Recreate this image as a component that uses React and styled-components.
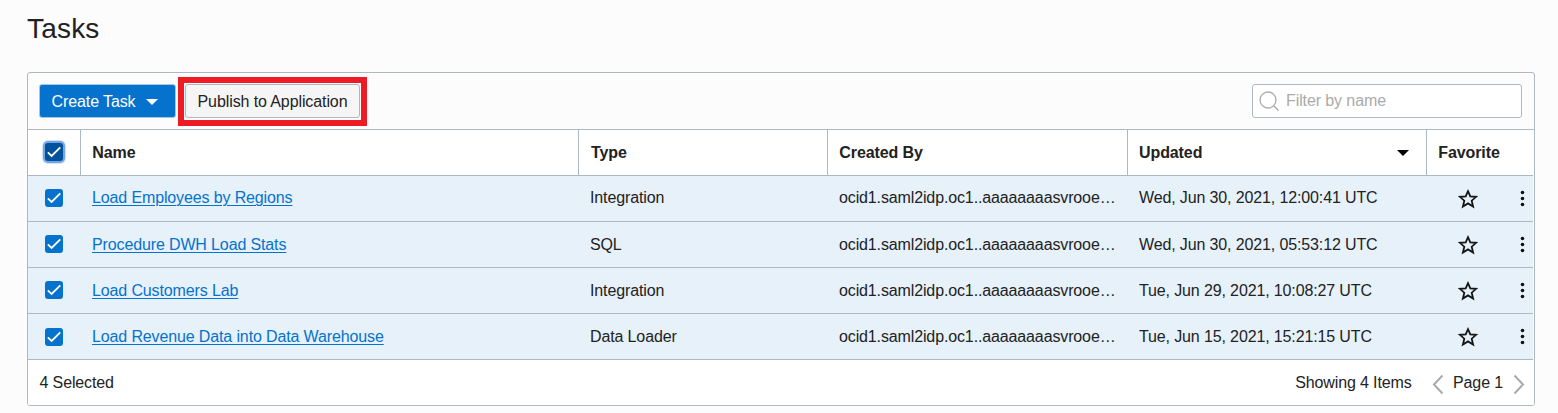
import React from 'react';
import styled, { createGlobalStyle } from 'styled-components';

const line = '#aeb8c2';

const GlobalStyle = createGlobalStyle`
  * { box-sizing: border-box; }
  body {
    margin: 0;
    background: #fcfcfc;
    color: #222;
    font: 16px/20px "Liberation Sans", Arial, sans-serif;
    letter-spacing: -0.13px;
  }
  button, input { font: inherit; color: inherit; letter-spacing: -0.1px; }
`;

const Page = styled.main`
  height: 413px;
  padding: 0 23px 0 27px;
  overflow: hidden;
`;

const Title = styled.h1`
  margin: 0;
  height: 72px;
  padding-top: 12px;
  font-size: 28px;
  line-height: 34px;
  font-weight: 400;
  letter-spacing: 0.2px;
`;

const Panel = styled.section`
  display: flex;
  flex-direction: column;
  height: 334px;
  border: 1px solid ${line};
  border-radius: 3px;
  overflow: hidden;
`;

const Toolbar = styled.div`
  display: flex;
  align-items: flex-start;
  height: 57px;
  padding: 4px 12px 0 11px;
  border-bottom: 1px solid ${line};
`;

const CreateButton = styled.button`
  display: flex;
  align-items: center;
  gap: 11px;
  width: 137px;
  height: 34px;
  margin: 7px 2px 0 0;
  padding: 1px 0 0 11.5px;
  border: 1px solid #a9c6de;
  border-radius: 3px;
  background: #0572ce;
  color: #fff;
  white-space: nowrap;
`;

const Highlight = styled.div`
  width: 189px;
  height: 49px;
  border: 6px solid #ed1c24;
  padding: 1px;
`;

const PublishButton = styled.button`
  display: block;
  width: 175px;
  height: 34px;
  padding: 2px 0 0;
  border: 1px solid ${line};
  border-radius: 3px;
  background: #f5f5f5;
  white-space: nowrap;
`;

const SearchField = styled.label`
  display: flex;
  align-items: center;
  gap: 6px;
  width: 270px;
  height: 34px;
  margin: 7px 0 0 auto;
  padding-left: 6px;
  border: 1px solid ${line};
  border-radius: 3px;
  background: #fff;
`;

const SearchInput = styled.input`
  flex: 1;
  min-width: 0;
  height: 20px;
  padding: 0;
  border: 0;
  outline: 0;
  background: none;
  &::placeholder { color: #aaa; opacity: 1; }
`;

const Row = styled.div`
  display: grid;
  grid-template-columns: 53px 498px 249px 300px 299px 106px;
  height: 46px;
  width: 1505px;
  background: ${(p) => (p.$selected ? '#e6f1fa' : '#fff')};
  border-bottom: 1px solid ${line};
`;

const HeadCell = styled.div`
  display: flex;
  align-items: center;
  justify-content: space-between;
  padding: 0 17px 0 ${(p) => p.$pad || 11.3}px;
  border-right: ${(p) => (p.$last ? '0' : `1px solid ${line}`)};
  font-weight: 700;
  letter-spacing: -0.1px;
`;

const CheckCell = styled.div`
  padding: ${(p) => p.$top}px 0 0 17px;
  border-right: ${(p) => (p.$head ? `1px solid ${line}` : '0')};
`;

const Cell = styled.div`
  min-width: 0;
  padding: ${(p) => p.$top}px 8px 0 11px;
  overflow: hidden;
  text-overflow: ellipsis;
  white-space: nowrap;
`;

const TaskLink = styled.a`
  color: #0572ce;
  text-decoration: underline;
  text-decoration-thickness: 1px;
  text-underline-offset: 2px;
`;

const Actions = styled.div`
  display: flex;
  align-items: flex-start;
  justify-content: space-between;
  padding: 12px 8px 0 30px;
`;

const CheckMark = styled.span`
  display: block;
  width: 18px;
  height: 18px;
  border-radius: 3px;
  background: ${(p) => (p.$focused ? '#01529b' : '#0572ce')};
  box-shadow: ${(p) => (p.$focused ? '0 0 0 2px #74a5e2, 0 0 1px 3px #cfe0f6' : 'none')};
  svg { display: block; }
`;

const Footer = styled.footer`
  display: flex;
  align-items: center;
  flex: 1;
  padding: 0 9.5px 0 11.5px;
  background: #fff;
`;

const Count = styled.span`
  margin: 0 20px 0 auto;
`;

const PageLabel = styled.span`
  margin: 0 9.5px;
`;

const Chevron = ({ flip }) => (
  <svg width="12" height="20" viewBox="0 0 12 20" fill="none" stroke="#aaa" strokeWidth="2" overflow="visible">
    <path d={flip ? 'M1.5 2.5 10 11.5 1.5 20.5' : 'M10.5 2.5 2 11.5 10.5 20.5'} />
  </svg>
);

const Check = ({ focused }) => (
  <CheckMark $focused={focused}>
    <svg width="18" height="18" viewBox="0 0 18 18" fill="none" stroke="#fff" strokeWidth="1.8">
      <path d="M2.8 9.3 6.6 13 15.3 4.3" />
    </svg>
  </CheckMark>
);

const Caret = ({ color }) => (
  <svg width="12" height="6" viewBox="0 0 12 6" fill={color}>
    <path d="M0 0h12L6 6z" />
  </svg>
);

const Star = () => (
  <svg width="22" height="22" viewBox="0 0 22 22" fill="none" stroke="#161616" strokeWidth="1.8">
    <path d="M11 3.1 13.3 8.3 19.1 8.8 14.7 12.7 16.1 18.5 11 15.4 5.9 18.5 7.3 12.7 2.9 8.8 8.7 8.3z" />
  </svg>
);

const Dots = () => (
  <svg width="6" height="22" viewBox="0 0 6 22" fill="#111">
    <circle cx="3.5" cy="4.5" r="1.8" />
    <circle cx="3.5" cy="10.5" r="1.8" />
    <circle cx="3.5" cy="16.5" r="1.8" />
  </svg>
);

const owner = 'ocid1.saml2idp.oc1..aaaaaaaasvrooe…';

const tasks = [
  { name: 'Load Employees by Regions', type: 'Integration', updated: 'Wed, Jun 30, 2021, 12:00:41 UTC', top: 12, check: 13 },
  { name: 'Procedure DWH Load Stats', type: 'SQL', updated: 'Wed, Jun 30, 2021, 05:53:12 UTC', top: 13, check: 13 },
  { name: 'Load Customers Lab', type: 'Integration', updated: 'Tue, Jun 29, 2021, 10:08:27 UTC', top: 13, check: 13 },
  { name: 'Load Revenue Data into Data Warehouse', type: 'Data Loader', updated: 'Tue, Jun 15, 2021, 15:21:15 UTC', top: 13, check: 14 },
];

export default function App() {
  return (
    <Page>
      <GlobalStyle />
      <Title>Tasks</Title>
      <Panel>
        <Toolbar>
          <CreateButton>
            Create Task
            <Caret color="#fff" />
          </CreateButton>
          <Highlight>
            <PublishButton>Publish to Application</PublishButton>
          </Highlight>
          <SearchField>
            <svg width="21" height="22" viewBox="0 0 21 22" fill="none" stroke="#aaa" strokeWidth="1.3">
              <circle cx="9" cy="10" r="8" />
              <path d="M14.7 15.7 19.5 20.5" />
            </svg>
            <SearchInput placeholder="Filter by name" />
          </SearchField>
        </Toolbar>
        <Row>
          <CheckCell $head $top={13}><Check focused /></CheckCell>
          <HeadCell>Name</HeadCell>
          <HeadCell $pad={12}>Type</HeadCell>
          <HeadCell>Created By</HeadCell>
          <HeadCell $pad={11}>Updated<Caret color="#000" /></HeadCell>
          <HeadCell $last>Favorite</HeadCell>
        </Row>
        {tasks.map((t) => (
          <Row key={t.name} $selected>
            <CheckCell $top={t.check}><Check /></CheckCell>
            <Cell $top={t.top}><TaskLink>{t.name}</TaskLink></Cell>
            <Cell $top={t.top}>{t.type}</Cell>
            <Cell $top={t.top}>{owner}</Cell>
            <Cell $top={t.top}>{t.updated}</Cell>
            <Actions><Star /><Dots /></Actions>
          </Row>
        ))}
        <Footer>
          <span>4 Selected</span>
          <Count>Showing 4 Items</Count>
          <Chevron />
          <PageLabel>Page 1</PageLabel>
          <Chevron flip />
        </Footer>
      </Panel>
    </Page>
  );
}
